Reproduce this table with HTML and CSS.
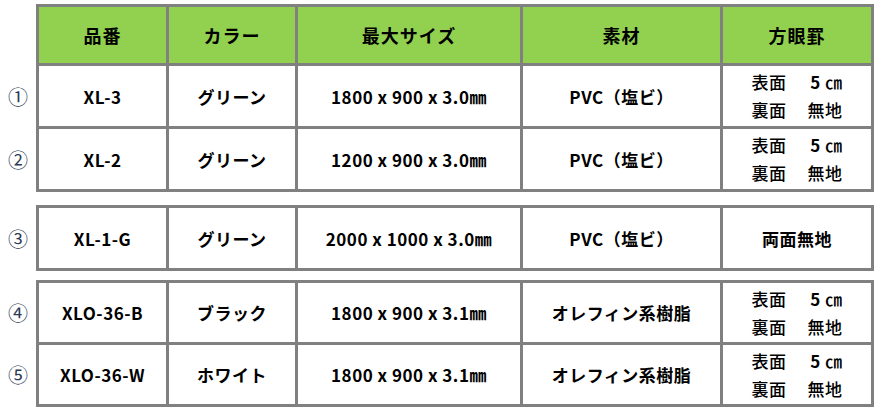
FILE: index.html
```html
<!DOCTYPE html>
<html lang="ja">
<head>
<meta charset="utf-8">
<link rel="stylesheet" href="styles.css">
</head>
<body>
<div class="page">
  <div class="block">
    <div class="nums">
      <div class="num head"></div>
      <div class="num">①</div>
      <div class="num">②</div>
    </div>
    <div class="grid with-head">
      <div class="cell th">品番</div>
      <div class="cell th">カラー</div>
      <div class="cell th">最大サイズ</div>
      <div class="cell th">素材</div>
      <div class="cell th">方眼罫</div>

      <div class="cell">XL-3</div>
      <div class="cell">グリーン</div>
      <div class="cell">1800 x 900 x 3.0㎜</div>
      <div class="cell">PVC（塩ビ）</div>
      <div class="cell"><div class="grid-lines"><div class="ln"><span>表面</span><span><b>5</b> ㎝</span></div><div class="ln"><span>裏面</span><span>無地</span></div></div></div>

      <div class="cell">XL-2</div>
      <div class="cell">グリーン</div>
      <div class="cell">1200 x 900 x 3.0㎜</div>
      <div class="cell">PVC（塩ビ）</div>
      <div class="cell"><div class="grid-lines"><div class="ln"><span>表面</span><span><b>5</b> ㎝</span></div><div class="ln"><span>裏面</span><span>無地</span></div></div></div>
    </div>
  </div>

  <div class="block gap1">
    <div class="nums">
      <div class="num">③</div>
    </div>
    <div class="grid">
      <div class="cell">XL-1-G</div>
      <div class="cell">グリーン</div>
      <div class="cell">2000 x 1000 x 3.0㎜</div>
      <div class="cell">PVC（塩ビ）</div>
      <div class="cell">両面無地</div>
    </div>
  </div>

  <div class="block gap2 short">
    <div class="nums">
      <div class="num">④</div>
      <div class="num">⑤</div>
    </div>
    <div class="grid">
      <div class="cell">XLO-36-B</div>
      <div class="cell">ブラック</div>
      <div class="cell">1800 x 900 x 3.1㎜</div>
      <div class="cell">オレフィン系樹脂</div>
      <div class="cell"><div class="grid-lines"><div class="ln"><span>表面</span><span><b>5</b> ㎝</span></div><div class="ln"><span>裏面</span><span>無地</span></div></div></div>

      <div class="cell">XLO-36-W</div>
      <div class="cell">ホワイト</div>
      <div class="cell">1800 x 900 x 3.1㎜</div>
      <div class="cell">オレフィン系樹脂</div>
      <div class="cell"><div class="grid-lines"><div class="ln"><span>表面</span><span><b>5</b> ㎝</span></div><div class="ln"><span>裏面</span><span>無地</span></div></div></div>
    </div>
  </div>
</div>
</body>
</html>
```

FILE: styles.css
```css
html, body {
  margin: 0;
  padding: 0;
  background: #ffffff;
}
body {
  font-family: "Noto Sans CJK JP", "Noto Sans", sans-serif;
  color: #000;
}
.page {
  padding-top: 4px;
  width: 880px;
}
.block {
  display: flex;
  --rh: 60px;
}
.block.short {
  --rh: 59px;
}
.gap1 { margin-top: 13px; }
.gap2 { margin-top: 9px; }
.nums {
  width: 36px;
  display: flex;
  flex-direction: column;
  gap: 3px;
  padding-top: 3px;
}
.num {
  height: var(--rh);
  display: flex;
  align-items: center;
  justify-content: center;
  font-size: 20px;
  font-weight: 400;
  color: #2b3a55;
}
.num.head {
  height: 56px;
}
.grid {
  display: grid;
  grid-template-columns: 127px 126px 222px 197px 148px;
  grid-auto-rows: var(--rh);
  gap: 3px;
  padding: 3px;
  background: #808080;
}
.grid.with-head {
  grid-template-rows: 56px;
}
.cell {
  background: #fff;
  display: flex;
  align-items: center;
  justify-content: center;
  font-size: 17px;
  font-weight: 700;
  letter-spacing: 0.5px;
}
.th {
  background: #92d050;
  font-size: 18px;
  letter-spacing: 1px;
}
.grid-lines {
  width: 91px;
  display: flex;
  flex-direction: column;
  gap: 2px;
}
.ln {
  display: flex;
  justify-content: space-between;
  line-height: 26px;
  font-weight: 500;
}
.ln b {
  font-weight: 700;
}
```
